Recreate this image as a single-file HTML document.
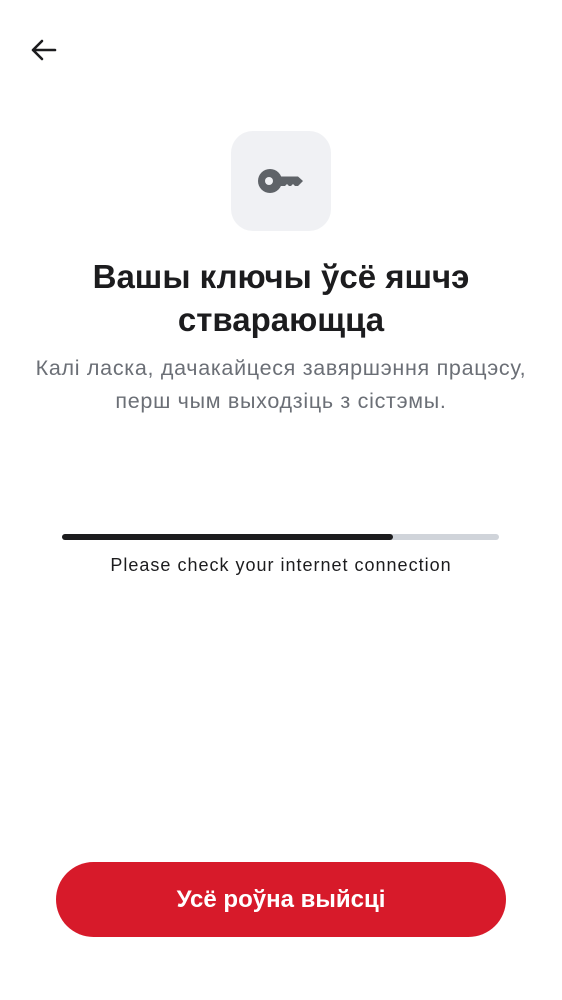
<!DOCTYPE html><html><head><meta charset="utf-8"><style>
body{margin:0;width:562px;height:1000px;background:#fff;font-family:"Liberation Sans",sans-serif;position:relative;overflow:hidden}
.t{position:absolute;left:0;width:562px;text-align:center;white-space:nowrap}
</style></head><body>
<svg style="position:absolute;left:28px;top:36px" width="30" height="30" viewBox="0 0 30 30"><path d="M27 14H5M14 5L5 14L14 23" stroke="#1c1c1e" stroke-width="2.6" fill="none" stroke-linecap="round" stroke-linejoin="round"/></svg>
<div style="position:absolute;left:231px;top:131px;width:100px;height:100px;border-radius:22px;background:#f0f1f4"></div>
<svg style="position:absolute;left:231px;top:131px" width="100" height="100" viewBox="0 0 100 100"><circle cx="39" cy="50" r="12" fill="#5f6368"/><circle cx="38" cy="50" r="4" fill="#f0f1f4"/><path d="M48 45.5H67L72 50L67 55H64L62 53L60 55H58L56 53L54 55H48Z" fill="#5f6368"/></svg>
<div class="t" style="top:255px;font-size:33px;font-weight:bold;color:#1c1c1e;line-height:43px">Вашы ключы ўсё яшчэ<br>стварающца</div>
<div class="t" style="top:352px;font-size:21.5px;color:#6b6f76;line-height:33px;letter-spacing:0.7px">Калі ласка, дачакайцеся завяршэння працэсу,<br>перш чым выходзіць з сістэмы.</div>
<div style="position:absolute;left:62px;top:534px;width:437px;height:6px;border-radius:3px;background:#d0d4da"></div>
<div style="position:absolute;left:62px;top:534px;width:331px;height:6px;border-radius:3px;background:#1c1c1e"></div>
<div class="t" style="top:555px;font-size:18px;color:#1c1c1e;letter-spacing:1px">Please check your internet connection</div>
<div style="position:absolute;left:56px;top:862px;width:450px;height:75px;border-radius:38px;background:#d71a2a;color:#fff;font-weight:bold;font-size:24px;line-height:75px;text-align:center">Усё роўна выйсці</div>
</body></html>
